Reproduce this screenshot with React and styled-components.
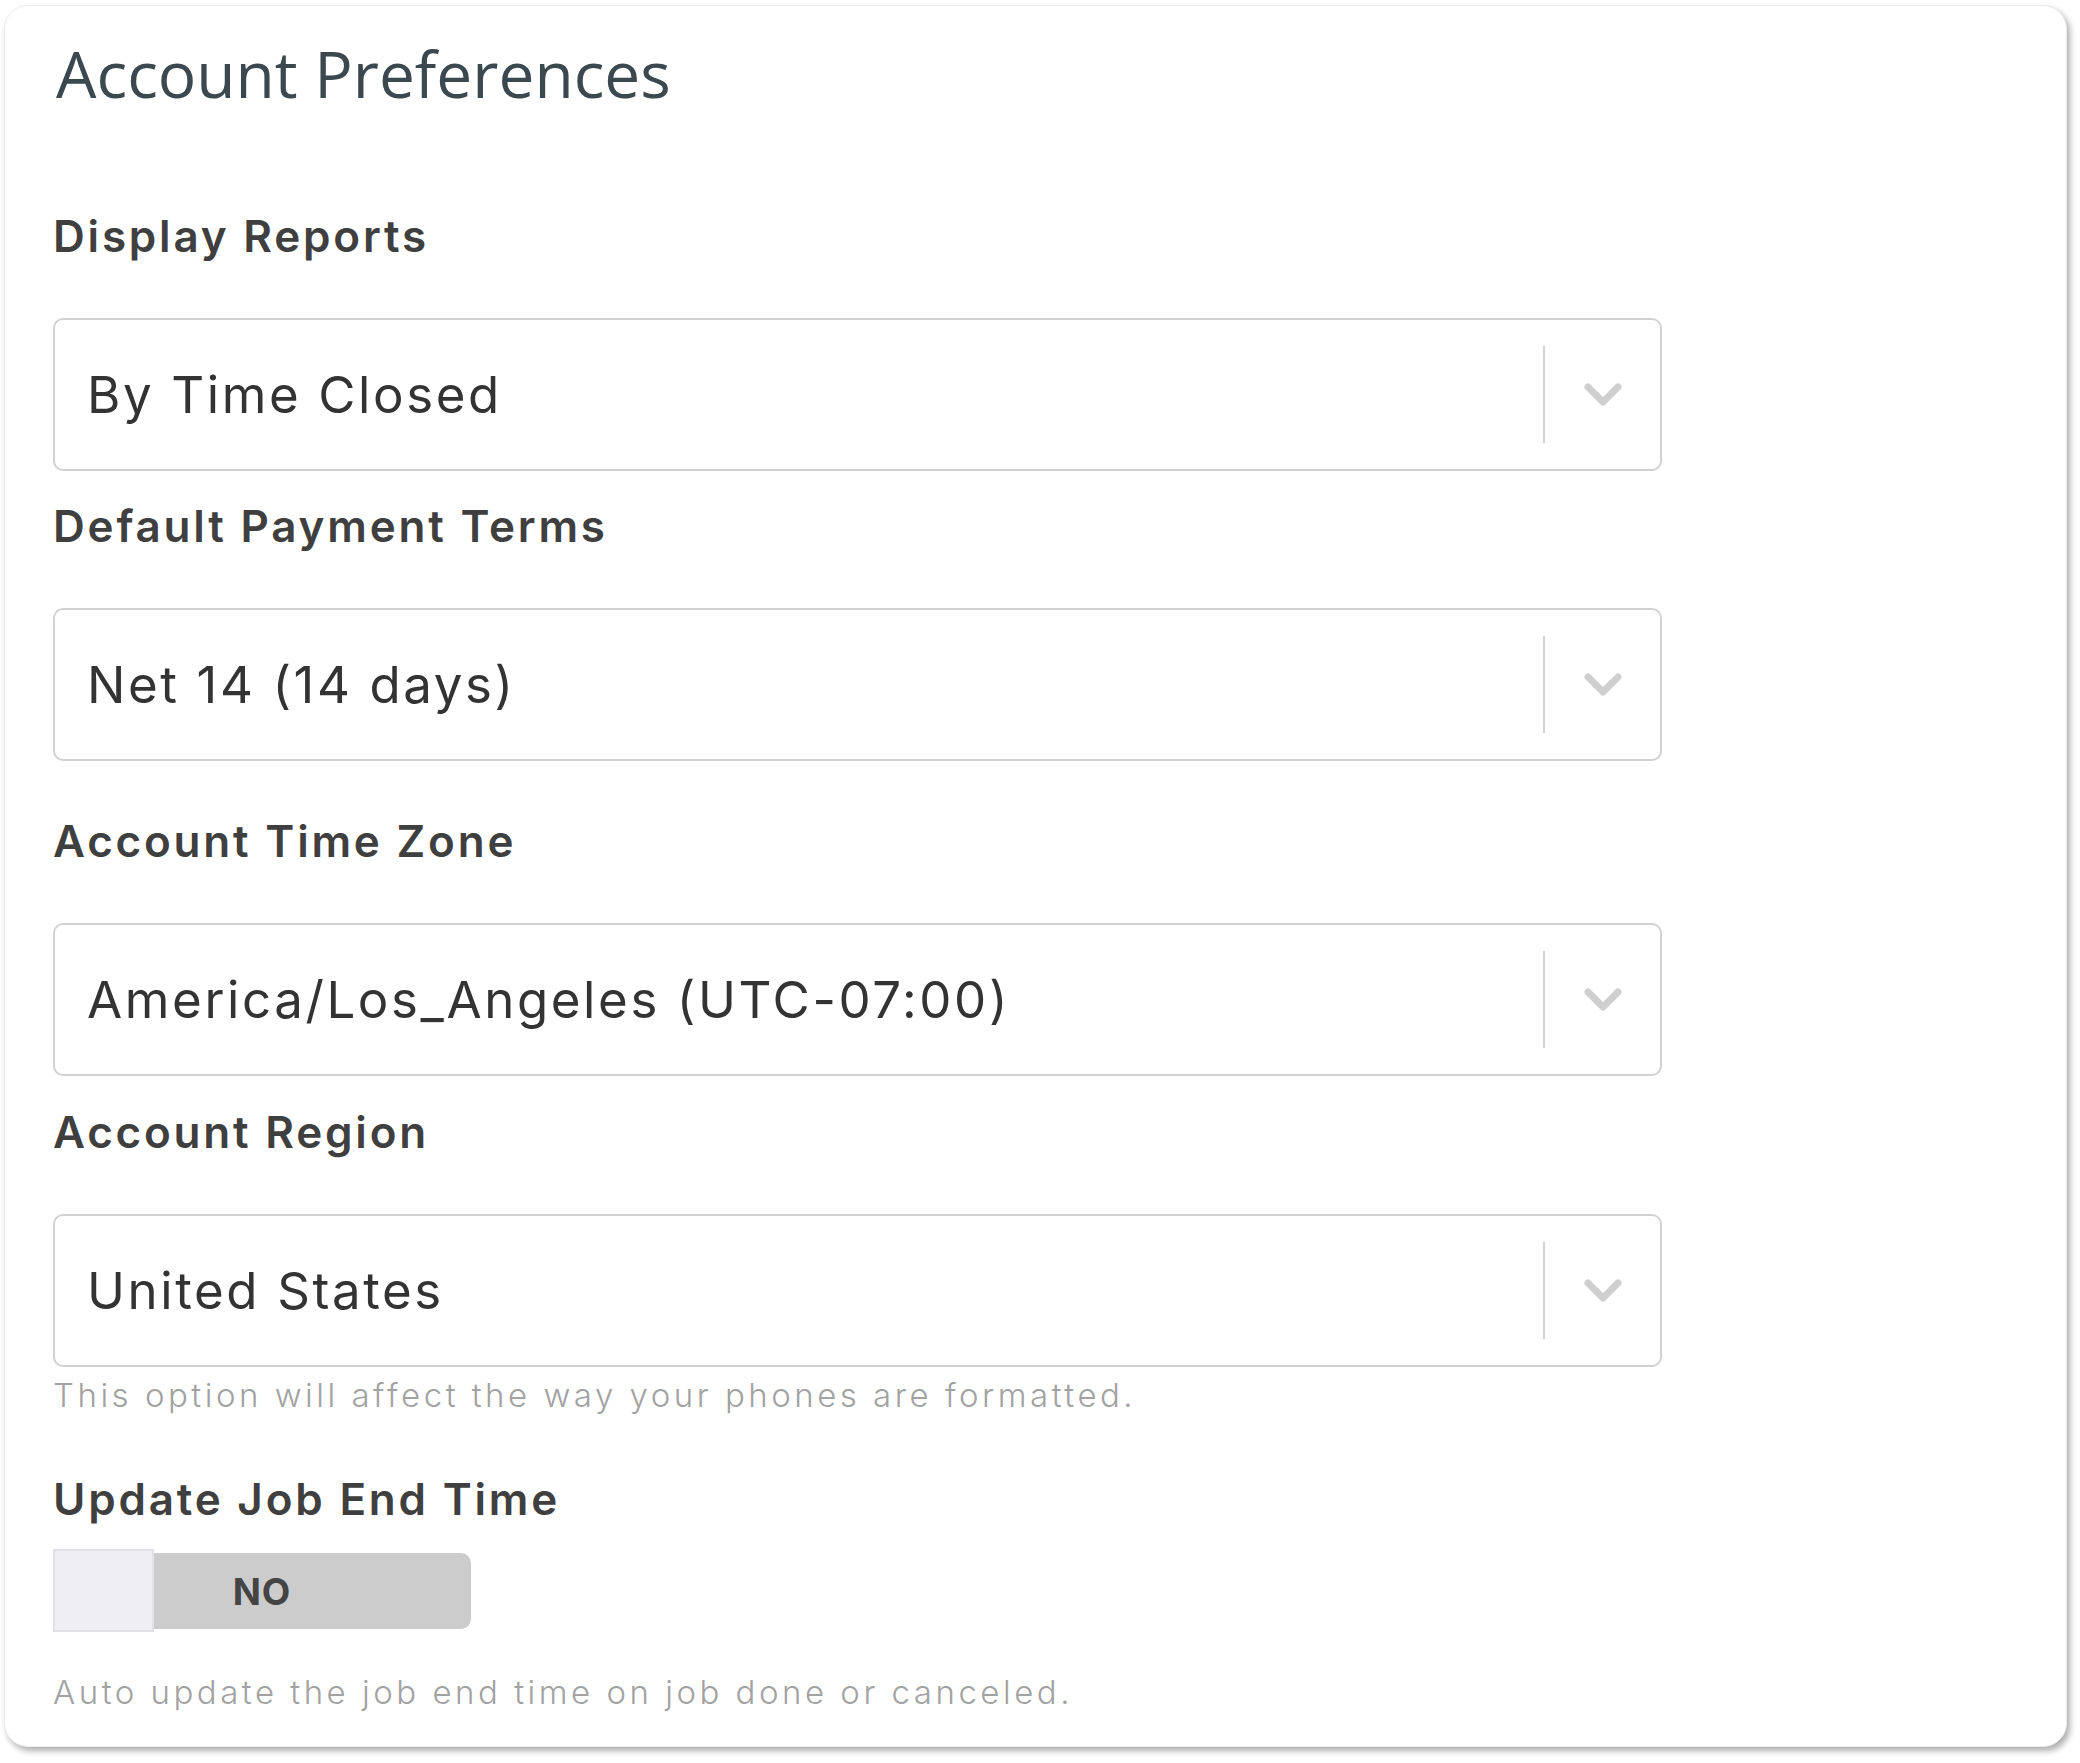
import React, { useState } from 'react';
import styled, { createGlobalStyle } from 'styled-components';

const GlobalStyle = createGlobalStyle`
  html, body {
    margin: 0;
    padding: 0;
    background: #ffffff;
  }
  * {
    box-sizing: border-box;
  }
`;

const Page = styled.div`
  padding: 5px 13px 15px 4px;
`;

const Card = styled.div`
  background: #fff;
  border-radius: 24px;
  border: 1px solid #ececec;
  box-shadow: 3px 4px 6px rgba(0, 0, 0, 0.32);
  padding: 36px 0 37px 48px;
`;

const Title = styled.h1`
  margin: 0 0 0 3px;
  font-family: 'Open Sans', sans-serif;
  font-weight: 400;
  font-size: 64px;
  line-height: 1;
  color: #3b4850;
`;

const Form = styled.div`
  width: 1609px;
  display: flex;
  flex-direction: column;
`;

const Label = styled.div`
  margin-top: ${(p) => p.$gap}px;
  font-family: 'Inter', sans-serif;
  font-weight: 600;
  font-size: 44px;
  line-height: 1;
  letter-spacing: 2.8px;
  color: #3f3f3f;
`;

const SelectBox = styled.div`
  margin-top: 60px;
  height: 153px;
  border: 2px solid #d2d2d2;
  border-radius: 10px;
  display: flex;
  align-items: center;
  padding-left: 32px;
`;

const Value = styled.div`
  flex: 1;
  font-family: 'Inter', sans-serif;
  font-weight: 400;
  font-size: 51px;
  line-height: 1;
  letter-spacing: 2.6px;
  color: #333;
`;

const Separator = styled.span`
  width: 2px;
  height: 97px;
  background: #d2d2d2;
`;

const Indicator = styled.div`
  width: 115px;
  display: flex;
  align-items: center;
  justify-content: center;
`;

const Hint = styled.div`
  margin-top: ${(p) => p.$gap}px;
  font-family: 'Inter', sans-serif;
  font-weight: 300;
  font-size: 33px;
  line-height: 1;
  color: #a2a2a2;
  letter-spacing: 3.5px;
`;

const Toggle = styled.button`
  position: relative;
  margin-top: 32px;
  width: 418px;
  height: 76px;
  border: none;
  border-radius: 0 10px 10px 0;
  background: #cccccc;
  font-family: 'Inter', sans-serif;
  font-weight: 700;
  font-size: 37px;
  letter-spacing: 1px;
  color: #444;
  padding: 0;
  cursor: pointer;
`;

const Knob = styled.span`
  position: absolute;
  left: 0;
  top: -4px;
  width: 101px;
  height: 83px;
  background: #efeff3;
  border: 2px solid #e2e2e4;
`;

const fields = [
  { label: 'Display Reports', value: 'By Time Closed', gap: 108 },
  { label: 'Default Payment Terms', value: 'Net 14 (14 days)', gap: 33 },
  { label: 'Account Time Zone', value: 'America/Los_Angeles (UTC-07:00)', gap: 58 },
  {
    label: 'Account Region',
    value: 'United States',
    gap: 34,
    hint: 'This option will affect the way your phones are formatted.',
  },
];

function Chevron() {
  return (
    <svg width="40" height="26" viewBox="0 0 40 26">
      <polyline
        points="5,5 20,20 35,5"
        fill="none"
        stroke="#cfcfcf"
        strokeWidth="7"
        strokeLinecap="round"
        strokeLinejoin="round"
      />
    </svg>
  );
}

function Select({ value }) {
  return (
    <SelectBox>
      <Value>{value}</Value>
      <Separator />
      <Indicator>
        <Chevron />
      </Indicator>
    </SelectBox>
  );
}

export default function App() {
  const [updateEnd, setUpdateEnd] = useState(false);
  return (
    <Page>
      <GlobalStyle />
      <Card>
        <Title>Account Preferences</Title>
        <Form>
          {fields.map((f) => (
            <React.Fragment key={f.label}>
              <Label $gap={f.gap}>{f.label}</Label>
              <Select value={f.value} />
              {f.hint && <Hint $gap={12}>{f.hint}</Hint>}
            </React.Fragment>
          ))}
          <Label $gap={65}>Update Job End Time</Label>
          <div>
            <Toggle onClick={() => setUpdateEnd(!updateEnd)}>
              <Knob />
              {updateEnd ? 'YES' : 'NO'}
            </Toggle>
          </div>
          <Hint $gap={47}>Auto update the job end time on job done or canceled.</Hint>
        </Form>
      </Card>
    </Page>
  );
}
